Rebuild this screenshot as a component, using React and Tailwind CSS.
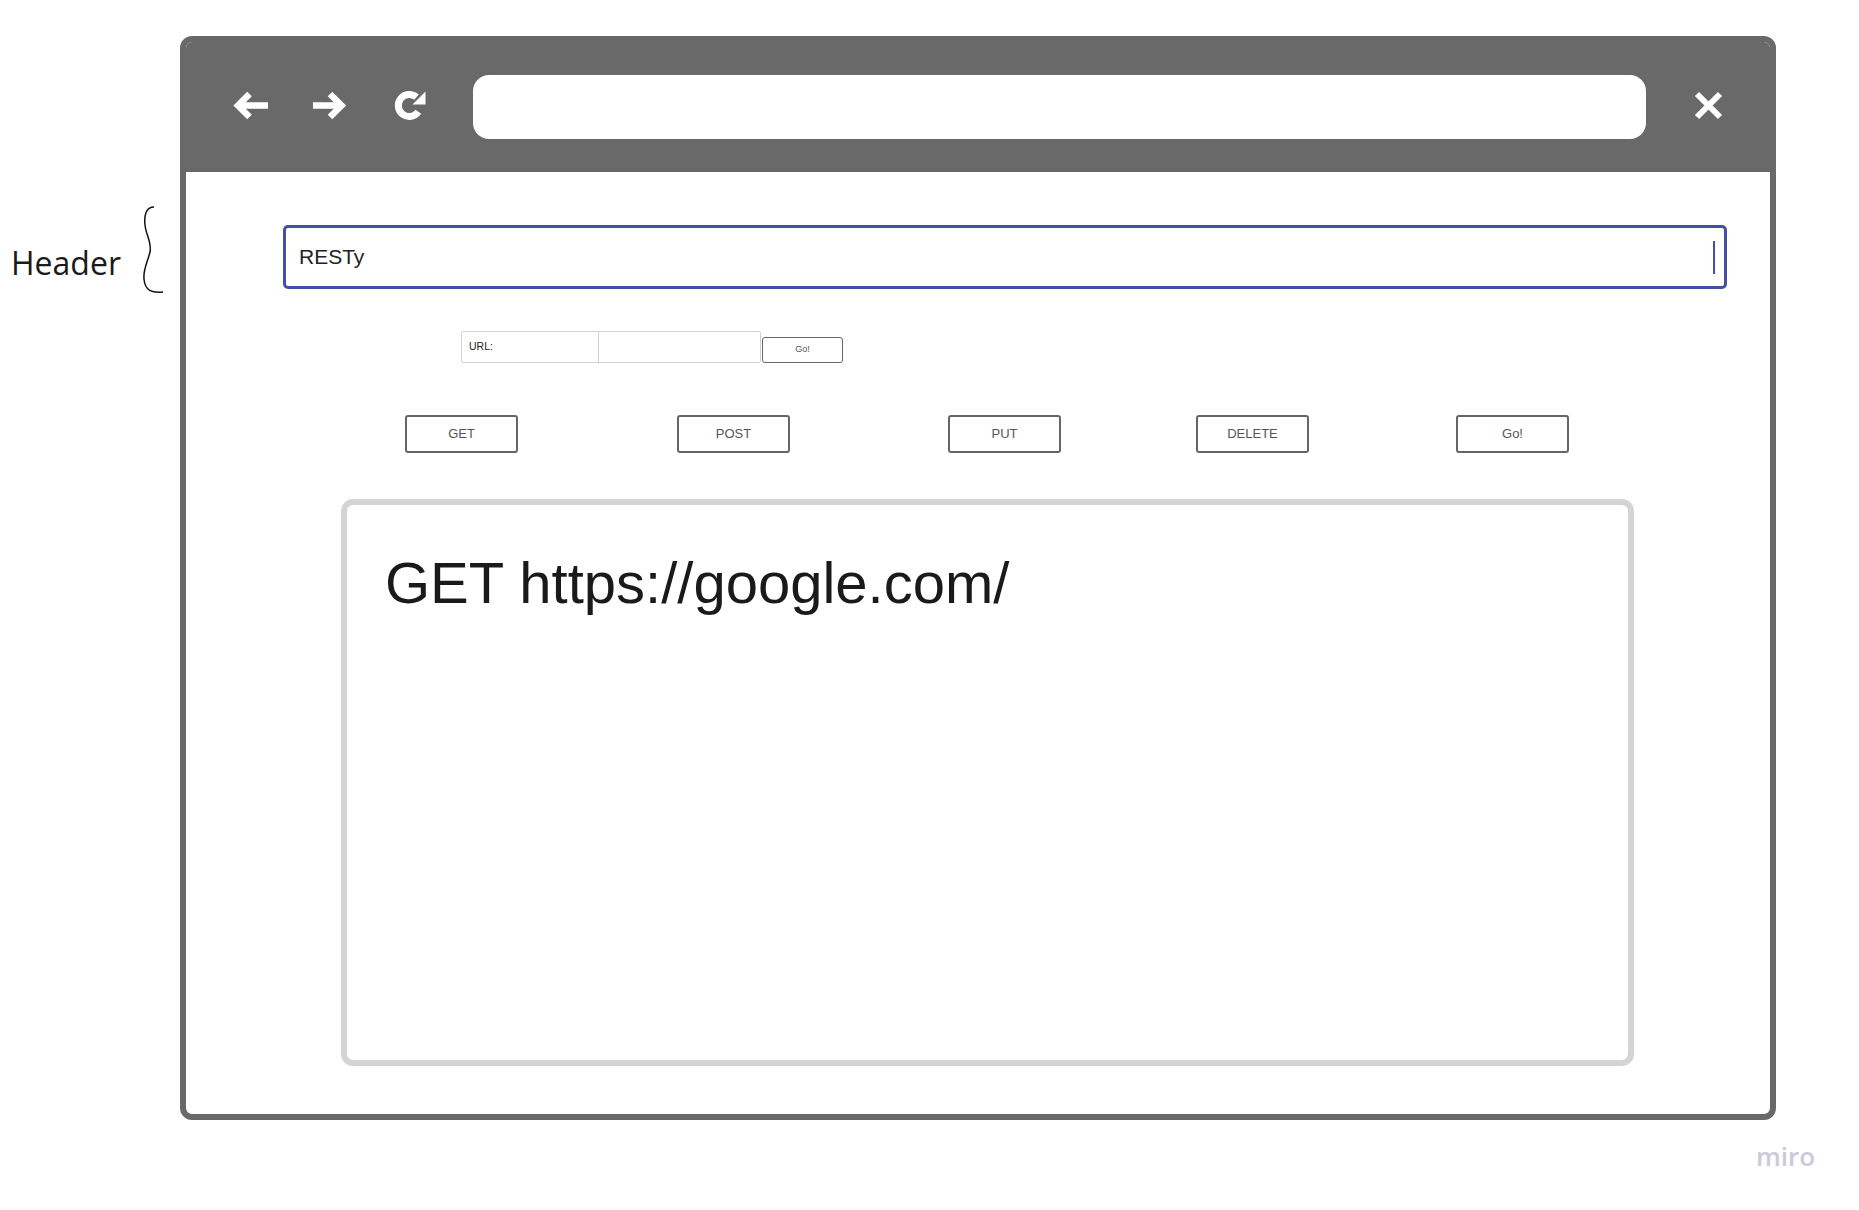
const BackIcon = () => (
  <svg width="37" height="29" viewBox="0 0 37 29" fill="none">
    <path d="M36 14.5H6 M17.5 3 L6 14.5 L17.5 26" stroke="#fff" strokeWidth="6.5" />
  </svg>
);

const ForwardIcon = () => (
  <svg width="34" height="29" viewBox="0 0 34 29" fill="none">
    <path d="M0 14.5H28 M17 3 L28.5 14.5 L17 26" stroke="#fff" strokeWidth="6.5" />
  </svg>
);

const RefreshIcon = () => (
  <svg width="32" height="31" viewBox="0 0 32 31" fill="none">
    <path d="M24.3 21.8 A11 11 0 1 1 22.5 7.2" stroke="#fff" strokeWidth="7" />
    <path d="M31.5 1.5 V14.5 H18.5 Z" fill="#fff" />
  </svg>
);

const CloseIcon = () => (
  <svg width="31" height="31" viewBox="0 0 31 31" fill="none">
    <path d="M4 4L27 27M27 4L4 27" stroke="#fff" strokeWidth="6" />
  </svg>
);

const Brace = () => (
  <svg width="30" height="95" viewBox="0 0 30 95" fill="none">
    <path
      d="M16 4 C8 4 6 12 7 22 C8 32 14 40 12 49 C10 58 5 66 6 76 C7 88 14 90 25 89"
      stroke="#111"
      strokeWidth="1.5"
    />
  </svg>
);

const methods = [
  { label: "GET", gap: "ml-0" },
  { label: "POST", gap: "ml-[159px]" },
  { label: "PUT", gap: "ml-[158px]" },
  { label: "DELETE", gap: "ml-[135px]" },
  { label: "Go!", gap: "ml-[147px]" },
];

export default function App() {
  return (
    <div className="relative h-[1210px] w-[1859px] overflow-hidden bg-white pl-[180px] pt-[36px] font-['Liberation_Sans',Arial,sans-serif]">
      {/* annotation on the board */}
      <div className="absolute left-[11px] top-[241px] font-['Open_Sans',sans-serif] text-[32px] leading-[44px] text-[#1a1a1a]">
        Header
      </div>
      <div className="absolute left-[138px] top-[203px]">
        <Brace />
      </div>

      <div className="flex h-[1084px] w-[1596px] flex-col overflow-hidden rounded-[12px] border-[6px] border-[#696969] bg-white">
        <div className="flex h-[130px] shrink-0 items-center bg-[#696969] px-[46px]">
          <div className="mb-[4px] flex items-center">
            <BackIcon />
            <div className="ml-[44px]">
              <ForwardIcon />
            </div>
            <div className="ml-[47px]">
              <RefreshIcon />
            </div>
          </div>
          <div className="ml-[47px] h-[64px] flex-1 rounded-[16px] bg-white" />
          <div className="mb-[4px] ml-[47px]">
            <CloseIcon />
          </div>
        </div>

        <div className="flex flex-1 flex-col">
          <div className="ml-[97px] mr-[43px] mt-[53px] flex h-[64px] items-center rounded-[5px] border-[3px] border-[#4351a3] pl-[13px] pr-[9px]">
            <span className="text-[21px] text-[#222]">RESTy</span>
            <span className="ml-auto h-[33px] w-[2px] bg-[#4351a3]" />
          </div>

          <div className="ml-[275px] mt-[42px] flex items-end">
            <div className="flex h-[32px] w-[300px] rounded-[2px] border border-[#d2d2d2]">
              <div className="flex w-[137px] items-center border-r border-[#d2d2d2] pl-[7px] text-[10.5px] text-[#222]">
                URL:
              </div>
              <div className="flex-1" />
            </div>
            <button className="ml-[1px] h-[26px] w-[81px] rounded-[3px] border-[1.5px] border-[#666] bg-white text-[9px] text-[#555]">
              Go!
            </button>
          </div>

          <div className="ml-[219px] mt-[52px] flex">
            {methods.map((m) => (
              <button
                key={m.label}
                className={`${m.gap} h-[38px] w-[113px] rounded-[3px] border-2 border-[#666] bg-white text-[13px] text-[#555]`}
              >
                {m.label}
              </button>
            ))}
          </div>

          <div className="ml-[155px] mt-[46px] h-[567px] w-[1293px] rounded-[12px] border-[6px] border-[#d4d4d4] pl-[38px] pt-[34px]">
            <p className="text-[58px] leading-normal text-[#1a1a1a]">GET https://google.com/</p>
          </div>
        </div>
      </div>

      <div className="absolute left-[1756px] top-[1143px] font-['Open_Sans',sans-serif] text-[26px] font-semibold leading-none text-[#cbcad8]">
        miro
      </div>
    </div>
  );
}
